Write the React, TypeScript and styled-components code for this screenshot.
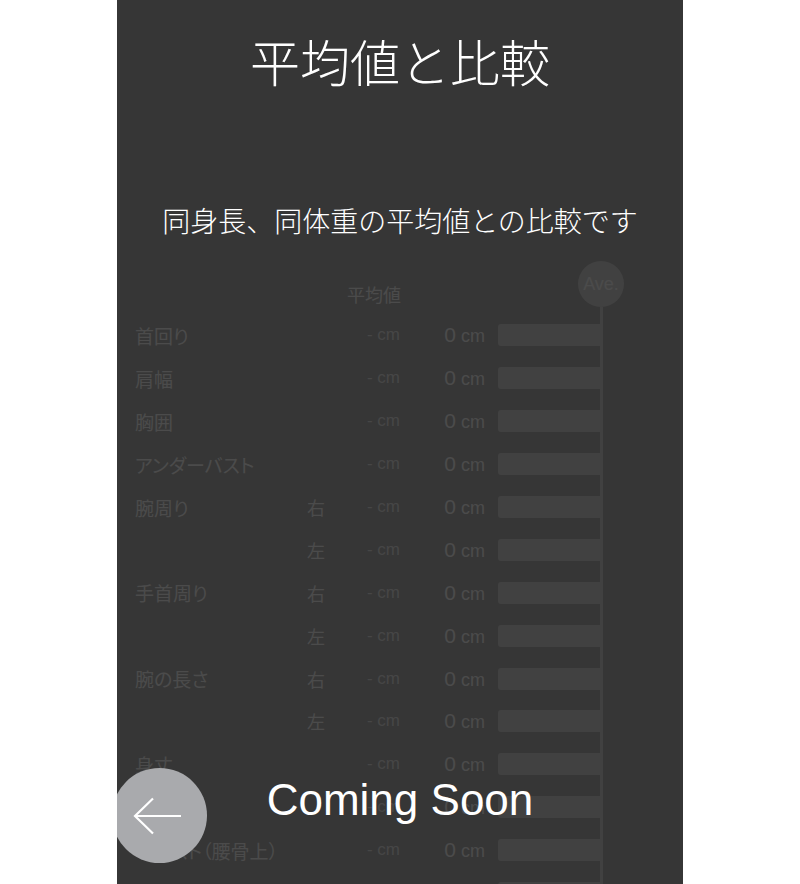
import styled, { createGlobalStyle } from 'styled-components'

const GlobalStyle = createGlobalStyle`
  html, body {
    margin: 0;
    padding: 0;
    background: #ffffff;
  }
`

const jp = `"Noto Sans CJK JP", "Noto Sans", sans-serif`
const latin = `"Liberation Sans", Arial, sans-serif`

const Screen = styled.main`
  position: relative;
  width: 566px;
  height: 884px;
  margin: 0 auto;
  background: #363636;
  overflow: hidden;
  color: #ffffff;
  font-family: ${jp};
`

const Title = styled.h1`
  margin: 0;
  padding-top: 30px;
  font-size: 50px;
  line-height: 60px;
  font-weight: 300;
  text-align: center;
`

const Lead = styled.p`
  margin: 110px 0 0;
  font-size: 28px;
  line-height: 40px;
  font-weight: 300;
  text-align: center;
`

// the whole table is greyed out until the feature ships
const Table = styled.section`
  display: flex;
  margin-top: 21px;
  padding-left: 18px;
  opacity: 0.1;
`

const Grid = styled.div`
  display: grid;
  grid-template-columns: 172px 40px 53px 85px 115px;
  grid-template-rows: 53px;
  grid-auto-rows: 42.9px;
  align-items: center;
`

const HeadCell = styled.div<{ $end?: boolean }>`
  align-self: stretch;
  ${(p) => (p.$end ? 'justify-self: end;' : '')}
`

const HeadLabel = styled.div`
  padding-top: 21px;
  font-size: 18px;
  line-height: 24px;
  text-align: right;
  white-space: nowrap;
`

const AveBadge = styled.div`
  width: 46px;
  height: 46px;
  margin-right: -24px;
  border-radius: 50%;
  background: #a4a4a4;
  display: flex;
  align-items: center;
  justify-content: center;
  font-family: ${latin};
  font-size: 18px;
  color: #ffffff;
`

const Label = styled.div`
  font-size: 19px;
  white-space: nowrap;
  font-feature-settings: 'palt';
`

const Side = styled.div`
  font-size: 18px;
`

const Avg = styled.div`
  font-family: ${latin};
  font-size: 17px;
  color: #d0d0d0;
  text-align: right;
`

const Value = styled.div`
  font-family: ${latin};
  font-size: 18px;
  text-align: right;

  b {
    font-weight: 400;
    font-size: 21px;
    margin-right: 5px;
  }
`

const Bar = styled.div`
  width: 102px;
  height: 22px;
  margin-left: 13px;
  border-radius: 3px 0 0 3px;
  background: #a4a4a4;
`

const Axis = styled.div`
  width: 3px;
  margin-top: 46px;
  background: #a0a0a0;
`

const Soon = styled.div`
  position: absolute;
  left: 0;
  right: 0;
  top: 775px;
  text-align: center;
  font-family: ${latin};
  font-size: 44px;
  line-height: 50px;
  color: #ffffff;
`

const BackButton = styled.button`
  position: absolute;
  left: -5px;
  top: 768px;
  width: 95px;
  height: 95px;
  padding: 0;
  border: none;
  border-radius: 50%;
  background: #a9aaad;
  cursor: pointer;

  svg {
    display: block;
  }
`

type Row = { label?: string; side?: string }

const rows: Row[] = [
  { label: '首回り' },
  { label: '肩幅' },
  { label: '胸囲' },
  { label: 'アンダーバスト' },
  { label: '腕周り', side: '右' },
  { side: '左' },
  { label: '手首周り', side: '右' },
  { side: '左' },
  { label: '腕の長さ', side: '右' },
  { side: '左' },
  { label: '身丈' },
  { label: 'ウエスト' },
  { label: 'ウエスト（腰骨上）' },
  { label: 'ヒップ' },
]

export default function App() {
  return (
    <>
      <GlobalStyle />
      <Screen>
        <Title>平均値と比較</Title>
        <Lead>同身長、同体重の平均値との比較です</Lead>

        <Table>
          <Grid>
            <HeadCell />
            <HeadCell />
            <HeadCell>
              <HeadLabel>平均値</HeadLabel>
            </HeadCell>
            <HeadCell />
            <HeadCell $end>
              <AveBadge>Ave.</AveBadge>
            </HeadCell>

            {rows.map((r, i) => (
              <Cells key={i} row={r} />
            ))}
          </Grid>
          <Axis />
        </Table>

        <Soon>Coming Soon</Soon>

        <BackButton aria-label="戻る">
          <svg width="95" height="95" viewBox="0 0 95 95" fill="none" stroke="#ffffff" strokeWidth="2.2">
            <path d="M69 48H23" />
            <path d="M41 30.5L23 48L41 65.5" />
          </svg>
        </BackButton>
      </Screen>
    </>
  )
}

const Cells = ({ row }: { row: Row }) => (
  <>
    <Label>{row.label}</Label>
    <Side>{row.side}</Side>
    <Avg>- cm</Avg>
    <Value>
      <b>0</b>cm
    </Value>
    <Bar />
  </>
)
